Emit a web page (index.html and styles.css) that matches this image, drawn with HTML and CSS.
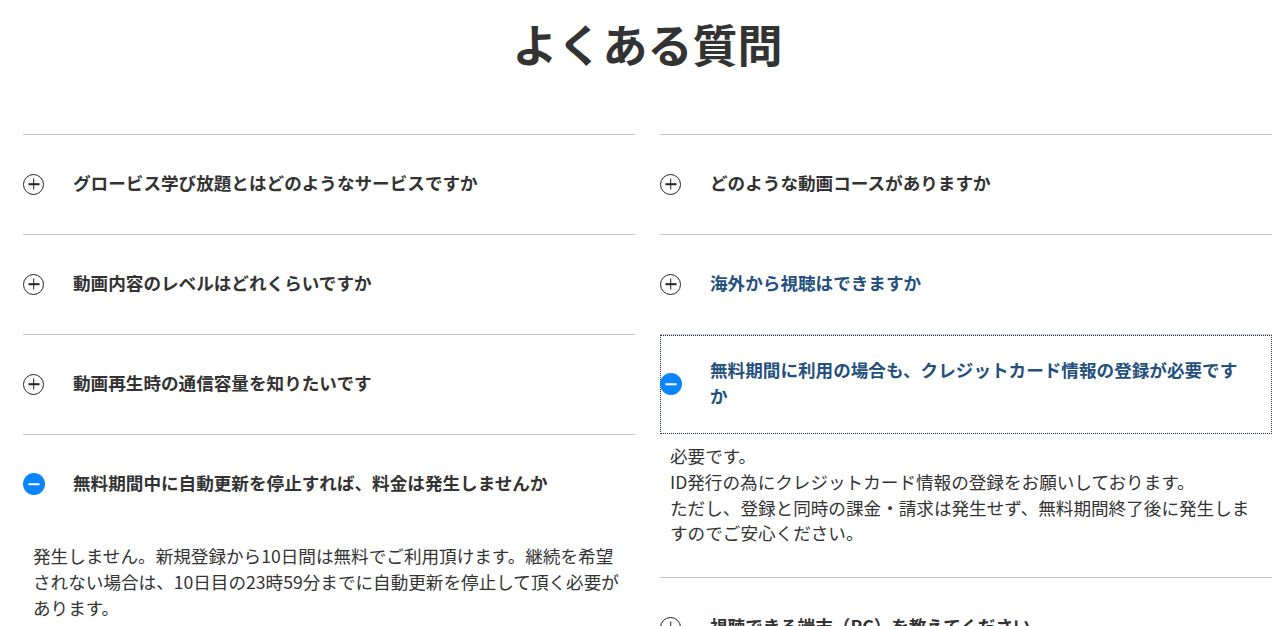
FILE: index.html
```html
<!DOCTYPE html>
<html lang="ja">
<head>
    <meta charset="UTF-8">
    <meta name="viewport" content="width=device-width, initial-scale=1.0">
    <title>よくある質問</title>
    <link rel="stylesheet" href="styles.css">
</head>
<body>

    <section class="faq">
        <h1 class="faq-title">よくある質問</h1>

        <div class="faq-grid">
            <div class="faq-col">
                <div class="faq-item">
                    <button class="faq-q" type="button"><span class="icon plus"></span><span class="q-text">グロービス学び放題とはどのようなサービスですか</span></button>
                </div>
                <div class="faq-item">
                    <button class="faq-q" type="button"><span class="icon plus"></span><span class="q-text">動画内容のレベルはどれくらいですか</span></button>
                </div>
                <div class="faq-item">
                    <button class="faq-q" type="button"><span class="icon plus"></span><span class="q-text">動画再生時の通信容量を知りたいです</span></button>
                </div>
                <div class="faq-item open">
                    <button class="faq-q" type="button"><span class="icon minus"></span><span class="q-text">無料期間中に自動更新を停止すれば、料金は発生しませんか</span></button>
                    <div class="faq-a">
                        <p>発生しません。新規登録から10日間は無料でご利用頂けます。継続を希望されない場合は、10日目の23時59分までに自動更新を停止して頂く必要があります。</p>
                    </div>
                </div>
            </div>

            <div class="faq-col">
                <div class="faq-item">
                    <button class="faq-q" type="button"><span class="icon plus"></span><span class="q-text">どのような動画コースがありますか</span></button>
                </div>
                <div class="faq-item visited">
                    <button class="faq-q" type="button"><span class="icon plus"></span><span class="q-text">海外から視聴はできますか</span></button>
                </div>
                <div class="faq-item open visited">
                    <button class="faq-q focused" type="button"><span class="icon minus"></span><span class="q-text">無料期間に利用の場合も、クレジットカード情報の登録が必要ですか</span></button>
                    <div class="faq-a">
                        <p>必要です。<br>ID発行の為にクレジットカード情報の登録をお願いしております。<br>ただし、登録と同時の課金・請求は発生せず、無料期間終了後に発生しますのでご安心ください。</p>
                    </div>
                </div>
                <div class="faq-item">
                    <button class="faq-q" type="button"><span class="icon plus"></span><span class="q-text">視聴できる端末（PC）を教えてください</span></button>
                </div>
            </div>
        </div>
    </section>

</body>
</html>
```

FILE: styles.css
```css
body { margin: 0; font-family: "Noto Sans CJK JP", "Noto Sans", sans-serif; color: #333; background: #fff; }
.faq { padding: 11px 10px 0 23px; }
.faq-title { margin: 0 0 57px; font-size: 45px; line-height: 66px; font-weight: 700; text-align: center; color: #333; }
.faq-grid { display: grid; grid-template-columns: 1fr 1fr; column-gap: 25px; }
.faq-col { display: flex; flex-direction: column; }
.faq-item { border-top: 1px solid #c8c8c8; }
.faq-q { display: flex; align-items: center; width: 100%; min-height: 99px; padding: 0 30px 0 0; margin: 0; border: none; background: none; font: inherit; font-size: 17.6px; line-height: 26px; font-weight: 700; color: #333; text-align: left; cursor: pointer; }
.faq-q.focused { outline: 1px dotted #1c3350; outline-offset: -1px; }
.visited .faq-q { color: #24507d; }
.q-text { flex: 1; padding-bottom: 3px; }
.icon { flex: none; position: relative; box-sizing: border-box; width: 21px; height: 21px; margin: 0 29px 1px 0; border-radius: 50%; }
.icon::before, .icon::after { content: ""; position: absolute; left: 50%; top: 50%; background: currentColor; }
.plus { border: 1.6px solid #222; color: #222; }
.plus::before { width: 11px; height: 1.6px; transform: translate(-50%, -50%); }
.plus::after { width: 1.6px; height: 11px; transform: translate(-50%, -50%); }
.minus { width: 22px; height: 22px; margin-left: -0.5px; margin-right: 28.5px; background: #0a84ff; color: #fff; }
.minus::before { width: 11px; height: 1.5px; transform: translate(-50%, -50%); }
.minus::after { display: none; }
.faq-a { padding: 9px 10px 31px; }
.faq-a p { margin: 0; font-size: 17.6px; line-height: 25.8px; color: #333; }
```
